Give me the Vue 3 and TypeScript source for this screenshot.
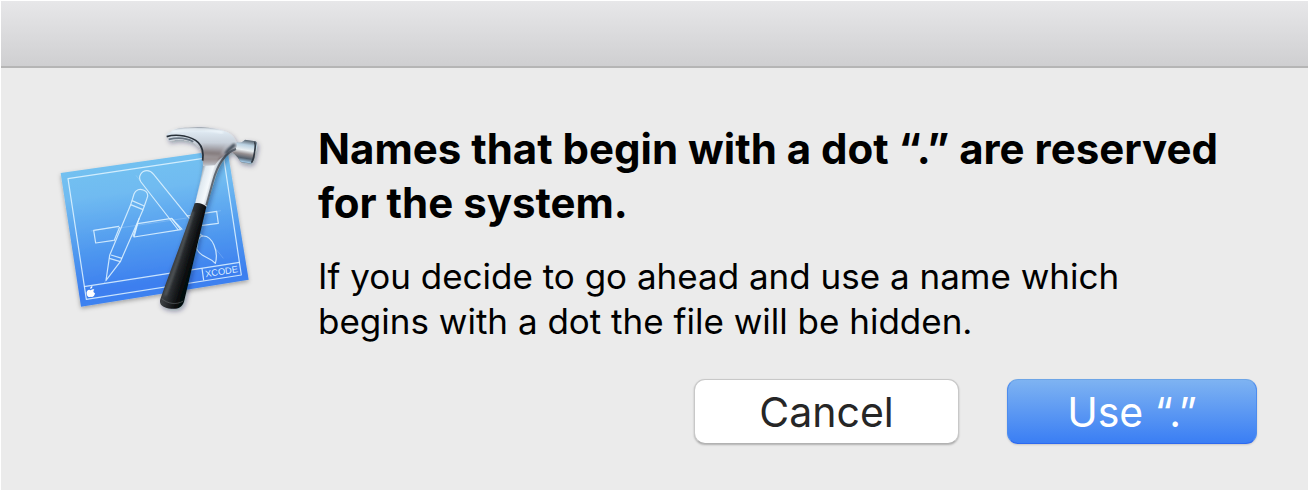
<script setup lang="ts">
import { ref } from 'vue'

const reservedName = ref('.')
const emit = defineEmits<{ cancel: []; confirm: [name: string] }>()
</script>

<template>
  <main class="dialog" role="alertdialog" aria-labelledby="alert-title" aria-describedby="alert-text">
    <header class="titlebar"></header>
    <div class="content">
      <svg class="icon" viewBox="0 0 660 615" aria-hidden="true">
        <defs>
          <linearGradient id="paper" x1="0.42" y1="0" x2="0.58" y2="1">
            <stop offset="0" stop-color="#74c3f0" />
            <stop offset="0.25" stop-color="#70bbf1" />
            <stop offset="0.6" stop-color="#4e97ef" />
            <stop offset="0.85" stop-color="#3c7eef" />
            <stop offset="1" stop-color="#4187f2" />
          </linearGradient>
          <linearGradient id="head" x1="0" y1="0" x2="0" y2="1">
            <stop offset="0" stop-color="#8b95a0" />
            <stop offset="0.1" stop-color="#dfeaf3" />
            <stop offset="0.4" stop-color="#c9d1db" />
            <stop offset="0.65" stop-color="#a3a1a8" />
            <stop offset="0.82" stop-color="#7b6b6c" />
            <stop offset="1" stop-color="#c6ccd4" />
          </linearGradient>
          <linearGradient id="neck" gradientUnits="userSpaceOnUse" x1="450" y1="180" x2="506" y2="196">
            <stop offset="0" stop-color="#8796a4" />
            <stop offset="0.18" stop-color="#e0e9f0" />
            <stop offset="0.55" stop-color="#f5f9fc" />
            <stop offset="0.78" stop-color="#b9c2cc" />
            <stop offset="1" stop-color="#535b67" />
          </linearGradient>
          <linearGradient id="blend" gradientUnits="userSpaceOnUse" x1="480" y1="80" x2="476" y2="150">
            <stop offset="0" stop-color="#b8bec8" stop-opacity="0" />
            <stop offset="0.5" stop-color="#817778" />
            <stop offset="1" stop-color="#e8eef3" stop-opacity="0" />
          </linearGradient>
          <linearGradient id="poll" gradientUnits="userSpaceOnUse" x1="584" y1="74" x2="572" y2="146">
            <stop offset="0" stop-color="#56616c" />
            <stop offset="0.2" stop-color="#b9d0e1" />
            <stop offset="0.42" stop-color="#e9eef1" />
            <stop offset="0.58" stop-color="#948e90" />
            <stop offset="0.75" stop-color="#55616e" />
            <stop offset="0.9" stop-color="#9fc4df" />
            <stop offset="1" stop-color="#38424d" />
          </linearGradient>
          <linearGradient id="grip" gradientUnits="userSpaceOnUse" x1="362" y1="410" x2="428" y2="430">
            <stop offset="0" stop-color="#17191b" />
            <stop offset="0.25" stop-color="#3c4043" />
            <stop offset="0.5" stop-color="#2a2d30" />
            <stop offset="0.8" stop-color="#121416" />
            <stop offset="1" stop-color="#060708" />
          </linearGradient>
          <filter id="sheet-shadow" x="-10%" y="-10%" width="120%" height="125%">
            <feDropShadow dx="0" dy="6" stdDeviation="6" flood-color="#000" flood-opacity="0.3" />
          </filter>
          <filter id="tool-shadow" x="-20%" y="-10%" width="150%" height="125%">
            <feDropShadow dx="4" dy="7" stdDeviation="8" flood-color="#04183c" flood-opacity="0.4" />
          </filter>
          <filter id="soft" x="-20%" y="-20%" width="140%" height="140%">
            <feGaussianBlur stdDeviation="3" />
          </filter>
        </defs>

        <path d="M32 174 L532 103 L596 494 L93 575 Z" fill="url(#paper)" filter="url(#sheet-shadow)" />

        <g fill="none" stroke="#e2f4ff" stroke-width="3.6" stroke-linejoin="round" stroke-opacity="0.85">
          <path d="M54 191 L520 121 L574 480 L109 553 Z" />
          <path d="M102 515 L569 442" />
          <path d="M456 460 L461 496" />
          <path d="M207 334 L131 346 L137 384 L191 376" />
          <path d="M263 326 L365 310 L392 344 L252 366 Z" />
          <path d="M410 303 L500 289 L505 325 L452 332" />
          <path d="M385 345 L273 201 C262 184 275 167 291 167 C300 167 306 172 311 178 L450 350" />
          <path d="M365 310 L397 344" />
          <path d="M246 257 L252 237 C257 223 270 221 280 225 C292 230 296 238 291 250 L283 273 Z" />
          <path d="M246 257 L242 269 L279 284 L283 273" />
          <path d="M242 269 L179 421 L168 496 L211 440 L279 284" />
          <path d="M183 420 L216 430 M178 430 L211 440" />
          <path d="M209 336 L192 378 M268 309 L249 365" />
          <path d="M440 402 C454 429 477 424 496 445 C506 411 488 362 459 363 C449 363 442 374 440 402 Z" />
          <path d="M430 345 L458 363" />
        </g>
        <g fill="none" stroke="#d7edff" stroke-width="1.5" stroke-opacity="0.45">
          <path d="M123 348 L210 333 M200 340 L410 309 M500 289 L513 287" />
          <path d="M258 181 L273 201 M161 506 L168 496 M496 400 L520 430" />
        </g>
        <g fill="#fff">
          <path d="M122 526 C116 521 108 528 110 537 C112 546 117 548 123 545 C130 548 134 541 135 535 C129 532 129 527 133 524 C129 521 126 523 122 526 Z" />
          <path d="M121 522 C120 517 123 514 127 513 C128 518 125 521 121 522 Z" />
        </g>
        <text class="label" x="467" y="487" transform="rotate(-9 467 487)">XCODE</text>

        <g filter="url(#tool-shadow)">
          <path d="M458 92 C462 128 459 166 450 202 L435 266 L469 276 L491 204 C503 163 518 132 543 111 L535 80 Z" fill="url(#neck)" />
          <path d="M434 265 C448 262 458 266 469 275 L402 560 C396 578 382 583 364 581 C341 579 326 570 331 553 C362 462 399 371 434 265 Z" fill="url(#grip)" />
          <path d="M350 62 C349 56 353 54 362 52 C369 42 389 38 414 38 C451 34 495 38 521 48 C543 54 553 66 558 80 C568 85 577 81 585 74 L617 79 C622 82 623 91 619 105 C615 124 612 140 604 147 L573 142 C565 134 563 122 551 115 C529 110 508 131 495 151 L459 153 C460 121 451 94 428 82 C409 72 382 72 360 78 C352 78 352 73 357 70 Z" fill="url(#head)" />
        </g>
        <path d="M458 86 L529 86 C517 106 506 126 501 154 L459 154 Z" fill="url(#blend)" filter="url(#soft)" />
        <path d="M560 81 C571 86 579 80 585 74 L617 79 C622 82 623 91 619 105 C615 124 612 140 604 147 L573 142 C566 132 562 123 548 113 C557 108 561 96 560 81 Z" fill="url(#poll)" />
        <path d="M613 82 C620 86 611 136 604 143" fill="none" stroke="#303943" stroke-width="5" />
        <path d="M350 65 C381 55 426 64 445 83 C458 96 461 115 458 137" fill="none" stroke="#283039" stroke-width="5" />
        <path d="M356 73 C385 66 410 69 430 80" fill="none" stroke="#687582" stroke-width="5" />
        <path d="M366 50 C409 40 472 38 519 53" fill="none" stroke="#f0f7fc" stroke-width="7" filter="url(#soft)" />
        <path d="M558 102 C528 112 503 145 488 202 L469 271" fill="none" stroke="#3f4853" stroke-width="6" stroke-opacity="0.75" />
        <path d="M555 88 C545 96 536 102 527 117" fill="none" stroke="#3d4955" stroke-width="9" filter="url(#soft)" />
        <path d="M429 290 C405 370 378 457 346 542" fill="none" stroke="#757b80" stroke-opacity="0.5" stroke-width="7" filter="url(#soft)" />
        <path d="M335 551 C353 566 378 571 400 558" fill="none" stroke="#5d6265" stroke-opacity="0.65" stroke-width="3" />
      </svg>

      <section class="message">
        <h1 id="alert-title">Names that begin with a dot “{{ reservedName }}” are reserved for the system.</h1>
        <p id="alert-text">If you decide to go ahead and use a name which begins with a dot the file will be hidden.</p>
        <div class="actions">
          <button type="button" class="cancel" @click="emit('cancel')">Cancel</button>
          <button type="button" class="confirm" @click="emit('confirm', reservedName)">Use “{{ reservedName }}”</button>
        </div>
      </section>
    </div>
  </main>
</template>

<style>
body {
  background: #fff;
}
</style>

<style scoped>
.dialog {
  margin: 1px 0 6px 1px;
  background: #ebebeb;
  font-family: Inter, "Liberation Sans", sans-serif;
  color: #000;
}

.titlebar {
  height: 65px;
  background: linear-gradient(#e7e7e9, #cfcfd1);
  border-bottom: 2px solid #b5b5b5;
}

.content {
  display: flex;
  align-items: flex-start;
  gap: 48px;
  padding: 47px 51px 46px 49px;
}

.icon {
  flex: none;
  width: 220px;
}

.label {
  font-family: "Liberation Sans", sans-serif;
  font-size: 28px;
  fill: #dceeff;
}

.message {
  flex: 1;
  margin-top: 7px;
}

h1 {
  margin: 0 0 24px;
  font-size: 42px;
  line-height: 54px;
  font-weight: 700;
}

p {
  max-width: 860px;
  margin: 0 0 35px;
  font-size: 35px;
  line-height: 45px;
}

.actions {
  display: flex;
  justify-content: flex-end;
  gap: 48px;
}

button {
  height: 65px;
  padding: 0;
  border-radius: 11px;
  font-family: inherit;
  font-size: 41px;
  line-height: 60px;
}

.cancel {
  width: 265px;
  border: 1px solid #c8c8c8;
  border-bottom-color: #b2b2b2;
  background: #fff;
  color: #262626;
  box-shadow: 0 1px 2px rgba(0, 0, 0, 0.25);
}

.confirm {
  width: 250px;
  border: 1px solid;
  border-color: #6da5e7 #4d8cee #2d69ef;
  background: linear-gradient(#7eb3f2, #3a7ef4);
  color: #fff;
  box-shadow: 0 1px 2px rgba(0, 0, 0, 0.15);
}
</style>
